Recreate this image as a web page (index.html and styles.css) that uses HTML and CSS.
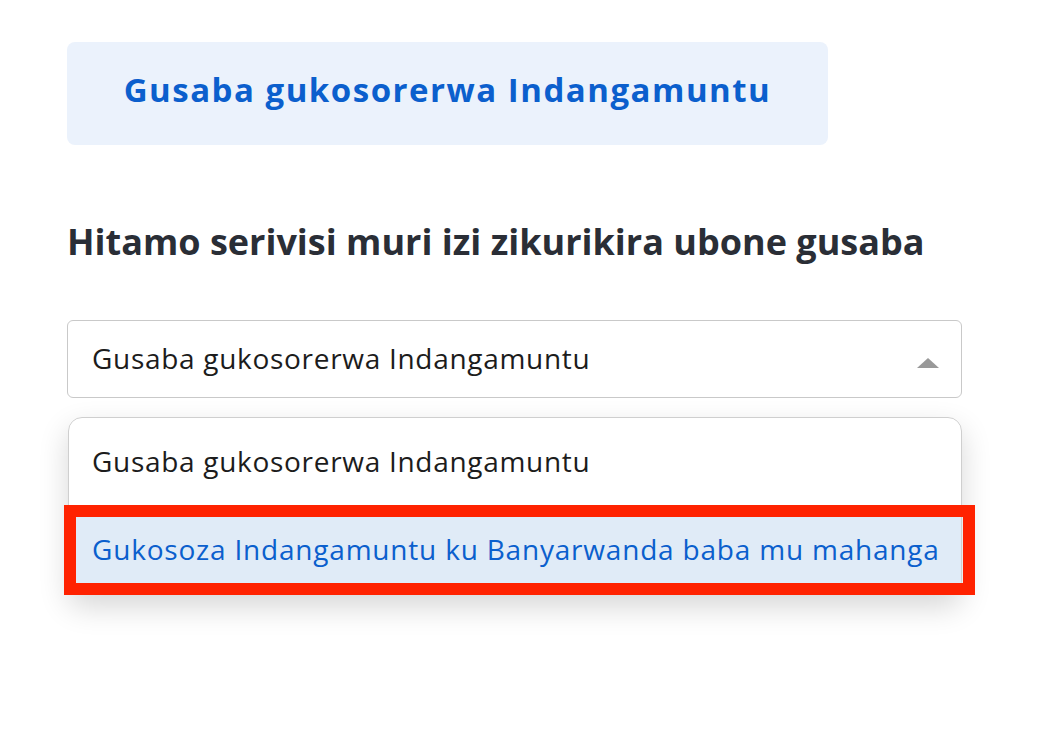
FILE: index.html
```html
<!DOCTYPE html>
<html>
<head>
<meta charset="utf-8">
<link rel="stylesheet" href="styles.css">
</head>
<body>
<main class="page">
  <div class="tab">Gusaba gukosorerwa Indangamuntu</div>
  <h2 class="title">Hitamo serivisi muri izi zikurikira ubone gusaba</h2>
  <div class="select">
    <div class="select-value">
      <span>Gusaba gukosorerwa Indangamuntu</span>
      <span class="arrow"></span>
    </div>
    <ul class="menu">
      <li class="option">Gusaba gukosorerwa Indangamuntu</li>
      <li class="option active">Gukosoza Indangamuntu ku Banyarwanda baba mu mahanga</li>
    </ul>
    <div class="highlight"></div>
  </div>
</main>
</body>
</html>
```
FILE: styles.css
```css
* { box-sizing: border-box; }
html, body { margin: 0; background: #fff; }
body { font-family: "Open Sans", "Noto Sans", sans-serif; }
.page { padding: 42px 0 0 67px; width: 1045px; height: 730px; }
.tab {
  width: 761px; height: 103px; padding-bottom: 9px;
  background: #ebf2fc; border-radius: 8px;
  color: #0b5fcd; font-weight: 700; font-size: 33px; letter-spacing: 1.5px;
  display: flex; align-items: center; justify-content: center;
}
.title {
  margin: 77px 0 0; font-size: 36px; font-weight: 700; color: #2a2e36;
  line-height: 40px;
}
.select { position: relative; width: 895px; margin-top: 58px; }
.select-value {
  height: 78px; border: 1px solid #c9c9c9; border-radius: 6px;
  display: flex; align-items: center; justify-content: space-between;
  padding: 0 22px 2px 24px; font-size: 28px; letter-spacing: 0.7px; color: #1c1c1c;
}
.arrow {
  width: 0; height: 0; margin-top: 9px;
  border-left: 11px solid transparent; border-right: 11px solid transparent;
  border-bottom: 10px solid #999;
}
.menu {
  list-style: none; margin: 19px 0 0 1px; padding: 0;
  border: 1px solid #cfcfcf; border-radius: 14px; overflow: hidden;
  box-shadow: 0 12px 30px rgba(0,0,0,0.16);
  width: 894px;
}
.option {
  height: 88px; display: flex; align-items: center; padding: 0 0 2px 23px;
  font-size: 28px; letter-spacing: 0.7px; color: #1c1c1c; white-space: nowrap;
}
.option.active { background: #e0ebf7; color: #0b5fcd; letter-spacing: 0.8px; }
.highlight {
  position: absolute; left: -3px; top: 185px; width: 911px; height: 90px;
  border: 12px solid #ff2200;
}
```
